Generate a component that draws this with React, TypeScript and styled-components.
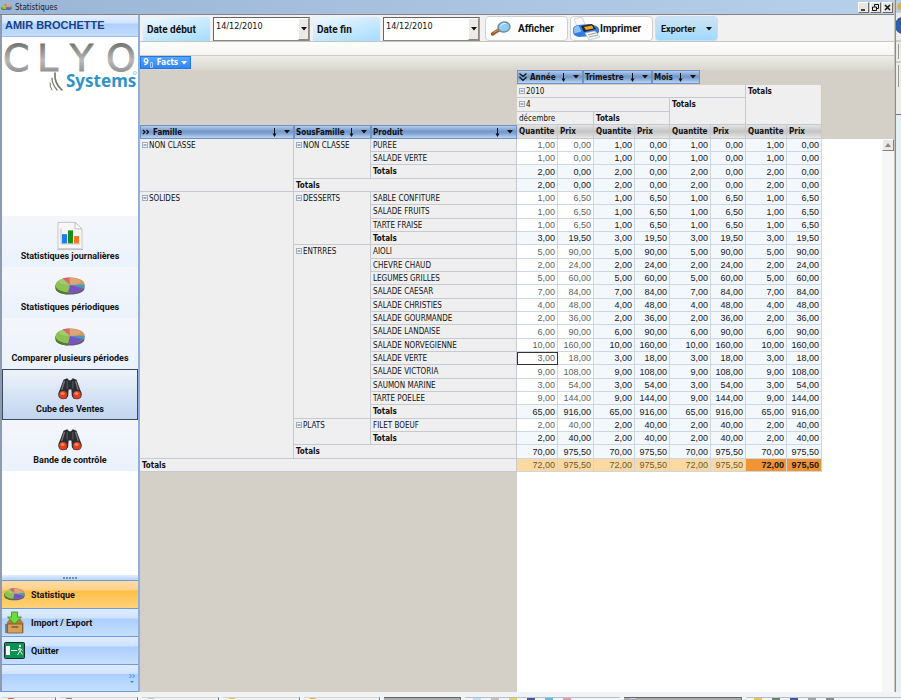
import React from "react";
import styled, { createGlobalStyle, css } from "styled-components";

const ARIAL = '"Liberation Sans", Arial, sans-serif';
const LABEL = 'Roboto, "Liberation Sans", sans-serif';
const TAHOMA = 'Tahoma, "DejaVu Sans Condensed", "DejaVu Sans", sans-serif';

const GlobalStyle = createGlobalStyle`
  * { box-sizing: border-box; }
  body { margin: 0; font-family: ${ARIAL}; font-size: 9px; color: #111; overflow: hidden; }
  button, input { font: inherit; color: inherit; margin: 0; padding: 0; border: 0; border-radius: 0; }
  svg { display: block; flex: none; }
`;

const Screen = styled.div`
  display: flex;
  flex-direction: column;
  height: 100vh;
`;
const Desktop = styled.div`
  flex: 1;
  min-height: 0;
  display: flex;
`;
const Window = styled.div`
  flex: 1;
  min-width: 0;
  display: flex;
  flex-direction: column;
  border-right: 1px solid #c9c5bd;
`;
const TitleBar = styled.header`
  display: flex;
  align-items: center;
  gap: 3px;
  height: 15px;
  flex: none;
  padding: 0 1px 0 1px;
  font-size: 9px;
  color: #222;
  background: linear-gradient(90deg, #9bb5d6, #b7d0eb);
  border-bottom: 1px solid #858585;
`;
const Title = styled.h1`
  margin: 0;
  flex: 1;
  font: 8px ${TAHOMA};
`;
const WindowButtons = styled.div`
  display: flex;
  gap: 1px;
`;
const WindowButton = styled.button`
  width: 11px;
  height: 11px;
  display: grid;
  place-items: center;
  background: #e8e6e1;
  border: 1px solid;
  border-color: #fff #6f6c66 #6f6c66 #fff;
`;
const Columns = styled.div`
  flex: 1;
  min-height: 0;
  display: flex;
`;

const Sidebar = styled.aside`
  width: 140px;
  flex: none;
  display: flex;
  flex-direction: column;
  background: #fff;
  border-left: 2px solid #8d9bb0;
  border-right: 2px solid #8fb0dc;
`;
const UserName = styled.h2`
  margin: 0;
  height: 22px;
  padding: 0 3px;
  font-size: 11px;
  line-height: 21px;
  color: #15428b;
  white-space: nowrap;
  background: linear-gradient(#e3efff 0, #d3e5ff 40%, #aed0ff 41%, #c3dcff 100%);
  border-bottom: 1px solid #9cbfee;
`;
const LogoArea = styled.div`
  flex: 1;
`;
const NavItem = styled.button<{ $active?: boolean }>`
  width: 100%;
  height: 51px;
  display: flex;
  flex-direction: column;
  align-items: center;
  justify-content: flex-end;
  padding-bottom: 5px;
  font-family: ${LABEL};
  font-weight: bold;
  line-height: 12px;
  background: linear-gradient(#f5f6fa, #eaf2fd);
  ${(p) =>
    p.$active &&
    css`
      background: linear-gradient(#eef3fa, #c0d5f0);
      border: 1px solid #3c4a60;
      padding-bottom: 4px;
    `}
`;
const NavIcon = styled.span`
  display: grid;
  place-items: center;
  height: 28px;
  margin-bottom: 1px;
`;
const NavGap = styled.div`
  height: 104px;
`;
const Splitter = styled.div`
  height: 5px;
  display: flex;
  gap: 1px;
  justify-content: center;
  align-items: center;
  background: linear-gradient(#e3efff, #b4d2fb);
`;
const Dot = styled.i`
  width: 2px;
  height: 2px;
  background: #6d8fc0;
`;
const Module = styled.button<{ $active?: boolean }>`
  width: 100%;
  height: 28px;
  display: flex;
  align-items: center;
  gap: 6px;
  padding: 0 2px;
  font-family: ${LABEL};
  font-weight: bold;
  border-top: 1px solid #6f9bdc;
  background: ${(p) =>
    p.$active
      ? "linear-gradient(#ffdca4 0, #ffd08a 34%, #ffbf45 36%, #ffd27a 100%)"
      : "linear-gradient(#e0edff 0, #cfe3ff 34%, #abcfff 36%, #c6dfff 100%)"};
`;
const ModuleOverflow = styled(Module)`
  justify-content: flex-end;
  border-bottom: 1px solid #6f9bdc;
`;

const Main = styled.main`
  flex: 1;
  min-width: 0;
  display: flex;
  flex-direction: column;
  background: #d4d0c8;
`;
const Toolbar = styled.div`
  display: flex;
  align-items: flex-end;
  height: 27px;
  flex: none;
  padding-left: 3px;
  gap: 3px;
  font-family: ${LABEL};
  font-size: 10px;
  font-weight: bold;
  background: #f1f1f1;
  border-bottom: 1px solid #c8c4bc;
`;
const FieldLabel = styled.label`
  width: 67px;
  height: 24px;
  padding-left: 4px;
  line-height: 25px;
  border-radius: 3px 3px 0 0;
  background: linear-gradient(165deg, #e9f5fd 10%, #a3dcff);
`;
const Combo = styled.div`
  width: 97px;
  height: 24px;
  display: flex;
  background: #fff;
  border: 1px solid;
  border-color: #666 #999 #888 #666;
`;
const ComboInput = styled.input`
  flex: 1;
  min-width: 0;
  height: 16px;
  padding-left: 2px;
  font-family: ${TAHOMA};
  font-size: 9px;
  font-weight: normal;
  background: transparent;
`;
const ComboButton = styled.button`
  width: 11px;
  display: grid;
  place-items: center;
  background: #eceae6;
  border: 1px solid;
  border-color: #fff #8b8882 #8b8882 #fff;
`;
const ToolButton = styled.button<{ $width: number; $blue?: boolean }>`
  width: ${(p) => p.$width}px;
  height: 25px;
  display: flex;
  align-items: center;
  gap: 7px;
  padding: 0 5px;
  border-radius: 4px;
  border: 1px solid ${(p) => (p.$blue ? "#c4e2f6" : "#cfcfcf")};
  background: ${(p) => (p.$blue ? "linear-gradient(#cfe3f2, #a0daff)" : "#fdfdfd")};
`;
const ToolGroup = styled.div`
  display: flex;
  gap: 2px;
  margin-left: 2px;
`;
const PrintButton = styled(ToolButton)`
  gap: 0;
  padding: 0 1px;
`;
const ExportButton = styled(ToolButton)`
  justify-content: space-between;
  font-size: 9px;
`;

const FilterBand = styled.div`
  height: 14px;
  flex: none;
  background: linear-gradient(#fdfdfd, #f6f5f3);
  border-bottom: 1px solid #cfcbc3;
`;
const FactsBand = styled.div`
  height: 14px;
  flex: none;
  display: flex;
  background: linear-gradient(#eeede9, #d9d6cf);
`;
const FactsButton = styled.button`
  width: 51px;
  height: 13px;
  display: flex;
  align-items: center;
  gap: 2px;
  padding: 0 3px 0 2px;
  font: bold 8px ${TAHOMA};
  color: #fff;
  background: linear-gradient(#58a6ff, #2e86f6);
  border: 1px solid #1f76e6;
`;
const ColumnFields = styled.div`
  height: 15px;
  flex: none;
  display: flex;
  padding-left: 377px;
`;
const FieldButton = styled.button<{ $width?: number }>`
  display: flex;
  align-items: center;
  gap: 3px;
  width: ${(p) => (p.$width ? p.$width + "px" : "100%")};
  height: 14px;
  padding: 0 3px 0 1px;
  font: bold 8px ${TAHOMA};
  text-align: left;
  white-space: nowrap;
  background: linear-gradient(#b3cbe9 0, #7398ca 45%, #7da1d1 60%, #bdd4ef 100%);
  border: 1px solid #6b93c8;
`;
const FieldName = styled.span`
  flex: 1;
`;
const FieldTools = styled.span`
  display: flex;
  align-items: center;
  gap: 7px;
`;

const Cube = styled.div`
  flex: 1;
  min-height: 0;
  display: flex;
`;
const CubeArea = styled.div`
  flex: 1;
  min-width: 0;
  background:
    linear-gradient(#d4d0c8, #d4d0c8) 0 0 / 100% 54px no-repeat,
    linear-gradient(90deg, #d4d0c8 377px, #fff 377px);
`;
const Table = styled.table`
  table-layout: fixed;
  width: 682px;
  border-collapse: separate;
  border-spacing: 0;
  line-height: 12px;
  tr { height: 13px; }
  tbody tr:nth-child(3n) { height: 14px; }
  thead tr:nth-child(2), thead tr:nth-child(4) { height: 14px; }
`;
const Head = styled.th<{ $bold?: boolean }>`
  padding: 2px 2px 0;
  vertical-align: top;
  text-align: left;
  white-space: nowrap;
  font-family: ${TAHOMA};
  font-size: 8px;
  line-height: 10px;
  background: #efefef;
  border-right: 1px solid #c6cad0;
  border-bottom: 1px solid #c6cad0;
  font-weight: ${(p) => (p.$bold ? "bold" : "normal")};
`;
const FieldHead = styled.th`
  padding: 0;
  vertical-align: top;
`;
const Measure = styled(Head)`
  background: linear-gradient(#e4e4e4, #c4c4c4 50%, #e6e6e6);
`;
const Value = styled.td<{ $tone: "leaf" | "sum" | "total" | "grand"; $focus?: boolean }>`
  padding: 0 2px 0 0;
  text-align: right;
  vertical-align: middle;
  font-size: 9px;
  border-right: 1px solid #ccd6e4;
  border-bottom: 1px solid #ccd6e4;
  color: ${(p) => (p.$tone === "leaf" ? "#5c6460" : p.$tone === "total" ? "#6a5a38" : "#15171c")};
  font-weight: ${(p) => (p.$tone === "grand" ? "bold" : "normal")};
  background: ${(p) =>
    ({ leaf: "#fff", sum: "#f3f8fc", total: "#fbd9a0", grand: "#f39433" })[p.$tone]};
  ${(p) => p.$focus && css`outline: 1px solid #333; outline-offset: -1px;`}
`;
const ToggleButton = styled.button`
  display: inline-block;
  vertical-align: 0;
  background: transparent;
  margin-right: 1px;
`;
const Scrollbar = styled.div`
  width: 12px;
  flex: none;
  margin-top: 54px;
  background: #f6f6f6;
`;
const ScrollButton = styled.button`
  width: 12px;
  height: 12px;
  display: grid;
  place-items: center;
  background: #ebe9e5;
  border: 1px solid;
  border-color: #fff #85827c #85827c #fff;
`;

const Backdrop = styled.div`
  width: 6px;
  flex: none;
  display: flex;
  flex-direction: column;
  background: #e4f0f3;
  border-left: 1px solid #8c8c8c;
`;
const BackdropTop = styled.div`
  height: 115px;
  background: #eeece8;
  border-bottom: 1px solid #777;
`;
const Taskbar = styled.footer`
  height: 8px;
  flex: none;
  display: flex;
  align-items: flex-end;
  gap: 4px;
  padding-left: 2px;
  background: #f1f4f7;
`;
const Task = styled.div<{ $width: number; $dark?: boolean; $accent?: string }>`
  width: ${(p) => p.$width}px;
  height: 3px;
  padding-left: 6px;
  border-top: 1px solid ${(p) => (p.$dark ? "#666" : "#d2d2d2")};
  border-right: 1px solid #777;
  background: ${(p) => (p.$dark ? "#aaa" : "#f2f2f2")};
  &::before {
    content: "";
    display: block;
    width: 6px;
    height: 1px;
    background: ${(p) => p.$accent || "transparent"};
  }
`;
const Tray = styled.div`
  flex: 1;
  height: 3px;
  display: flex;
  gap: 10px;
  padding-left: 8px;
  border-top: 1px solid #b8c0cc;
`;
const TrayMark = styled.i<{ $color: string }>`
  width: 8px;
  height: 2px;
  background: ${(p) => p.$color};
`;

const Caret = ({ color = "#111" }: { color?: string }) => (
  <svg width="6" height="4" viewBox="0 0 6 4"><path d="M0 0h6L3 3.5z" fill={color} /></svg>
);
const SortArrow = () => (
  <svg width="5" height="9" viewBox="0 0 5 9">
    <path d="M2.5 0v8" stroke="#111" />
    <path d="M.5 5.5h4L2.5 9z" fill="#111" />
  </svg>
);
const Chevrons = ({ down }: { down?: boolean }) => (
  <svg width="8" height="8" viewBox="0 0 8 8" fill="none" stroke="#111" strokeWidth="1.2">
    {down ? <path d="M.5.5 4 3.5 7.5.5M.5 4 4 7.5 7.5 4" /> : <path d="M1 2l2 2-2 2M4.500 2l2 2-2 2" />}
  </svg>
);
const Toggle = ({ label }: { label: string }) => (
  <ToggleButton aria-label={`Réduire ${label}`}>
    <svg width="6" height="6" viewBox="0 0 6 6">
      <rect x=".5" y=".5" width="5" height="5" fill="#f4f7fb" stroke="#9fadc2" />
      <path d="M1.500 3h3" stroke="#4b6386" />
    </svg>
  </ToggleButton>
);
const Logo = () => (
  <svg width="136" height="58" viewBox="0 0 136 58" overflow="visible" role="img" aria-label="CLYO Systems">
    <defs>
      <linearGradient id="steel" x1="0" y1="0" x2="0" y2="1">
        <stop offset="0" stopColor="#555" />
        <stop offset=".55" stopColor="#b9b9b9" />
        <stop offset="1" stopColor="#777" />
      </linearGradient>
    </defs>
    <text x="1 35 68 104" y="34" fontFamily="DejaVu Sans" fontSize="38" fill="url(#steel)" stroke="url(#steel)" strokeWidth=".8">CLYO</text>
    <g fill="none" stroke="#777265" strokeLinecap="round">
      <path d="M53 36q-1 10 7 17" strokeWidth="1.600" />
      <path d="M50 41q0 6 5 12" strokeWidth="1.200" />
      <path d="M48 46q0 4 2 7" />
    </g>
    <text x="64" y="50" fontFamily="Noto Sans, Open Sans" fontWeight="700" fontSize="17" fill="#2f93c5">Systems</text>
    <circle cx="133" cy="36" r="1.500" fill="none" stroke="#6bb6d6" strokeWidth=".6" />
  </svg>
);
const PieIcon = ({ width = 30 }: { width?: number }) => (
  <svg width={width} height={(width * 18) / 30} viewBox="0 0 30 18">
    <path d="M.5 8v3c0 4 6 6.500 14.500 6.500S29.500 15 29.500 11V8z" fill="#625c78" />
    <path d="M.5 8v3c0 3.500 5 6 12 6.500V12z" fill="#4f7a2d" />
    <ellipse cx="15" cy="8" rx="14.500" ry="7.500" fill="#8fc152" />
    <path d="M15 8 14.500.5C23 .3 29.500 3.500 29.500 7.500z" fill="#d99460" />
    <path d="M15 8 7.500 1.600Q10.500.6 14.500.5z" fill="#cf4d5b" />
    <path d="M15 8l14.500-.5q0 2-1.500 3.400z" fill="#3b9cc8" />
    <path d="M15 8l13 2.900C25.500 14 20 15.700 13 15.450z" fill="#7850c8" />
    <ellipse cx="15" cy="4.500" rx="11" ry="3.500" fill="#fff" opacity=".16" />
  </svg>
);
const ReportIcon = () => (
  <svg width="26" height="30" viewBox="0 0 26 32" preserveAspectRatio="none">
    <path d="M1 1.500h17l7 7v21H1z" fill="#f7f7f7" stroke="#c5c5c5" />
    <path d="M18 1.500v7h7z" fill="#fff" stroke="#bdbdbd" />
    <path d="M0 30h26v1H0z" fill="#bbb" />
    <path d="M5 14h5v10H5z" fill="#1d7df2" />
    <path d="M11 10h5v14h-5z" fill="#189018" />
    <path d="M17 16h5v8h-5z" fill="#ff7420" />
    <path d="M4 8v16.500h19" fill="none" stroke="#aaa" strokeWidth=".7" />
  </svg>
);
const Binoculars = () => (
  <svg width="26" height="23" viewBox="0 0 28 24">
    <path d="M7 2.500 11 1l2 2h2l2-2 4 1.500L26 16l-1 6-7 1-2-3-.5-7h-3L12 20l-2 3-7-1-1-6z" fill="#2c2d30" />
    <path d="M8 4 5 14M20 4l3 10" stroke="#777" strokeWidth="1.500" />
    <path d="M11 4v8M17 4v8" stroke="#55585c" strokeWidth="1.200" />
    <circle cx="6.500" cy="18.500" r="5.200" fill="#303135" />
    <circle cx="21.500" cy="18.500" r="5.200" fill="#303135" />
    <circle cx="6.500" cy="18.800" r="4.200" fill="#e0401f" />
    <circle cx="21.500" cy="18.800" r="4.200" fill="#e0401f" />
    <ellipse cx="6" cy="17.500" rx="2.200" ry="1.500" fill="#ff8862" />
    <ellipse cx="21" cy="17.500" rx="2.200" ry="1.500" fill="#ff8862" />
  </svg>
);
const ImportIcon = () => (
  <svg width="21" height="23" viewBox="0 0 20 23">
    <path d="M2 12 5 8h11l3 4v10H3z" fill="#b07b3e" />
    <path d="M3 13h15v9H3z" fill="#d3a05e" stroke="#80552a" strokeWidth=".8" />
    <path d="M1.500 13v9" stroke="#3d2b16" />
    <path d="M7 15h7v2H7z" fill="#9c6b34" />
    <path d="M7 1h6v5h4l-7 7-7-7h4z" fill="#6fdb3c" stroke="#2f8f1a" strokeWidth=".8" />
  </svg>
);
const ExitIcon = () => (
  <svg width="21" height="17" viewBox="0 0 21 17">
    <rect x=".5" y=".5" width="20" height="16" rx="1" fill="#079452" stroke="#1c2c28" />
    <path d="M2 4h4v9H2z" fill="#fff" />
    <path d="M7 8.500h6" stroke="#fff" />
    <circle cx="16" cy="4" r="1.200" fill="#fff" />
    <path d="M15.500 6 14 8.500M15.500 6l1 3.500 2 3M16 9l-2.500 4M16 6.500l2.500 2" stroke="#fff" fill="none" />
  </svg>
);
const SearchIcon = () => (
  <svg width="20" height="15" viewBox="0 0 20 15">
    <path d="M8.500 8.500 1.500 13" stroke="#a85d24" strokeWidth="3.400" strokeLinecap="round" />
    <path d="M8 8.300 3 11.500" stroke="#e49a54" strokeLinecap="round" />
    <ellipse cx="13" cy="6" rx="6" ry="5" fill="#8fcdef" stroke="#6d8ba5" strokeWidth="1.400" transform="rotate(-12 13 6)" />
    <path d="M9.500 5q2-3 5-2.500" stroke="#fff" fill="none" />
  </svg>
);
const PrinterIcon = () => (
  <svg width="28" height="24" viewBox="0 0 28 24">
    <path d="M2 2l8-2 4 10-8 2z" fill="#fafafa" stroke="#c4c4c4" strokeWidth=".7" />
    <path d="M1 12q0-3 5-4l11-1q9 1 10 5v3q-2 4-8 4L7 20q-6-1-6-5z" fill="#347be0" />
    <path d="M1.500 12q1-3 5-3.500l3 6-7 2z" fill="#8dc1f8" />
    <path d="M9 9l11-2 4 5-12 3z" fill="#27272b" />
    <path d="M12 10l8-1.500 1.500 3L14 13z" fill="#ffa51d" />
    <path d="M13 16l10-2 5 6-11 3z" fill="#f5fbf7" stroke="#a9b8c4" strokeWidth=".6" />
    <path d="M16 18l8-2" stroke="#d778b2" /><path d="M17 20l9-2" stroke="#6fcb84" />
  </svg>
);

const FieldControl = ({ name, width, lead }: { name: string; width?: number; lead?: React.ReactNode }) => (
  <FieldButton $width={width}>
    {lead}
    <FieldName>{name}</FieldName>
    <FieldTools><SortArrow /><Caret /></FieldTools>
  </FieldButton>
);

type Row = {
  family?: [string, number];
  sub?: [string, number];
  label: string;
  level?: 1 | 2 | 3;
  qty: string;
  price: string;
  focus?: boolean;
};
const item = (label: string, qty: string, price: string, extra: Partial<Row> = {}): Row => ({ label, qty, price, ...extra });
const total = (level: 1 | 2 | 3, qty: string, price: string): Row => ({ label: "Totals", level, qty, price });

const rows: Row[] = [
  item("PUREE", "1,00", "0,00", { family: ["NON CLASSE", 4], sub: ["NON CLASSE", 3] }),
  item("SALADE VERTE", "1,00", "0,00"),
  total(1, "2,00", "0,00"),
  total(2, "2,00", "0,00"),
  item("SABLE CONFITURE", "1,00", "6,50", { family: ["SOLIDES", 20], sub: ["DESSERTS", 4] }),
  item("SALADE FRUITS", "1,00", "6,50"),
  item("TARTE FRAISE", "1,00", "6,50"),
  total(1, "3,00", "19,50"),
  item("AIOLI", "5,00", "90,00", { sub: ["ENTRRES", 13] }),
  item("CHEVRE CHAUD", "2,00", "24,00"),
  item("LEGUMES GRILLES", "5,00", "60,00"),
  item("SALADE CAESAR", "7,00", "84,00"),
  item("SALADE CHRISTIES", "4,00", "48,00"),
  item("SALADE GOURMANDE", "2,00", "36,00"),
  item("SALADE LANDAISE", "6,00", "90,00"),
  item("SALADE NORVEGIENNE", "10,00", "160,00"),
  item("SALADE VERTE", "3,00", "18,00", { focus: true }),
  item("SALADE VICTORIA", "9,00", "108,00"),
  item("SAUMON MARINE", "3,00", "54,00"),
  item("TARTE POELEE", "9,00", "144,00"),
  total(1, "65,00", "916,00"),
  item("FILET BOEUF", "2,00", "40,00", { sub: ["PLATS", 2] }),
  total(1, "2,00", "40,00"),
  total(2, "70,00", "975,50"),
  total(3, "72,00", "975,50"),
];
const groups = [0, 1, 2, 3];

const CubeRow = ({ row }: { row: Row }) => (
  <tr>
    {row.family && <Head scope="rowgroup" rowSpan={row.family[1]}><Toggle label={row.family[0]} />{row.family[0]}</Head>}
    {row.sub && <Head scope="rowgroup" rowSpan={row.sub[1]}><Toggle label={row.sub[0]} />{row.sub[0]}</Head>}
    <Head scope="row" colSpan={row.level || 1} $bold={!!row.level}>{row.label}</Head>
    {groups.map((g) => {
      const tone = row.level === 3 ? (g === 3 ? "grand" : "total") : row.level || g > 0 ? "sum" : "leaf";
      return (
        <React.Fragment key={g}>
          <Value $tone={tone} $focus={row.focus && g === 0}>{row.qty}</Value>
          <Value $tone={tone}>{row.price}</Value>
        </React.Fragment>
      );
    })}
  </tr>
);

const nav = [
  { label: "Statistiques journalières", icon: <ReportIcon /> },
  { label: "Statistiques périodiques", icon: <PieIcon /> },
  { label: "Comparer plusieurs périodes", icon: <PieIcon /> },
  { label: "Cube des Ventes", icon: <Binoculars />, active: true },
  { label: "Bande de contrôle", icon: <Binoculars /> },
];

const DateField = ({ id, label }: { id: string; label: string }) => (
  <>
    <FieldLabel htmlFor={id}>{label}</FieldLabel>
    <Combo>
      <ComboInput id={id} defaultValue="14/12/2010" />
      <ComboButton aria-label={`Choisir ${label}`}><Caret /></ComboButton>
    </Combo>
  </>
);

export default function App() {
  return (
    <Screen>
      <GlobalStyle />
      <Desktop>
        <Window>
          <TitleBar>
            <PieIcon width={11} />
            <Title>Statistiques</Title>
            <WindowButtons>
              <WindowButton aria-label="Réduire"><svg width="7" height="7"><path d="M1 6h4" stroke="#111" strokeWidth="1.500" /></svg></WindowButton>
              <WindowButton aria-label="Restaurer"><svg width="7" height="7" fill="none" stroke="#111"><path d="M2.500 2.500v-2h4v4h-2M.5 3h4v3.500h-4z" /></svg></WindowButton>
              <WindowButton aria-label="Fermer"><svg width="7" height="7"><path d="M1 1l5 5M6 1 1 6" stroke="#111" strokeWidth="1.500" /></svg></WindowButton>
            </WindowButtons>
          </TitleBar>
          <Columns>
            <Sidebar>
              <UserName>AMIR BROCHETTE</UserName>
              <LogoArea><Logo /></LogoArea>
              <nav>
                {nav.map((n) => (
                  <NavItem key={n.label} $active={n.active}>
                    <NavIcon>{n.icon}</NavIcon>
                    {n.label}
                  </NavItem>
                ))}
              </nav>
              <NavGap />
              <Splitter>{[0, 1, 2, 3, 4].map((d) => <Dot key={d} />)}</Splitter>
              <Module $active><PieIcon width={21} />Statistique</Module>
              <Module><ImportIcon />Import / Export</Module>
              <Module><ExitIcon />Quitter</Module>
              <ModuleOverflow aria-label="Plus de modules">
                <svg width="8" height="11" viewBox="0 0 8 11" fill="none" stroke="#2f8cf0">
                  <path d="M1.500 1l2 2-2 2M4.500 1l2 2-2 2" />
                  <path d="M2 8h4L4 10z" fill="#2f8cf0" stroke="none" />
                </svg>
              </ModuleOverflow>
            </Sidebar>
            <Main>
              <Toolbar>
                <DateField id="start" label="Date début" />
                <DateField id="end" label="Date fin" />
                <ToolGroup>
                  <ToolButton $width={83}><SearchIcon />Afficher</ToolButton>
                  <PrintButton $width={83}><PrinterIcon />Imprimer</PrintButton>
                  <ExportButton $width={63} $blue>Exporter<Caret /></ExportButton>
                </ToolGroup>
              </Toolbar>
              <FilterBand />
              <FactsBand>
                <FactsButton>
                  <svg width="11" height="10" viewBox="0 0 11 10" fill="none" stroke="#fff">
                    <circle cx="3" cy="2.500" r="1.800" strokeWidth="1.300" />
                    <path d="M4.800 2.500q0 4-3.500 4" strokeWidth="1.300" />
                    <path d="M7.500 9.500v-5h2v5z" stroke="#a9cdf7" />
                  </svg>
                  <FieldName>Facts</FieldName>
                  <Caret color="#fff" />
                </FactsButton>
              </FactsBand>
              <ColumnFields>
                <FieldControl name="Année" width={66} lead={<Chevrons down />} />
                <FieldControl name="Trimestre" width={69} />
                <FieldControl name="Mois" width={48} />
              </ColumnFields>
              <Cube>
                <CubeArea>
                  <Table>
                    <colgroup>
                      {[154, 77, 146, 41, 36, 41, 35, 41, 35, 41, 35].map((w, i) => <col key={i} width={w} />)}
                    </colgroup>
                    <thead>
                      <tr>
                        <td colSpan={3} rowSpan={3} />
                        <Head colSpan={6}><Toggle label="2010" />2010</Head>
                        <Head colSpan={2} rowSpan={3} $bold>Totals</Head>
                      </tr>
                      <tr>
                        <Head colSpan={4}><Toggle label="4" />4</Head>
                        <Head colSpan={2} rowSpan={2} $bold>Totals</Head>
                      </tr>
                      <tr>
                        <Head colSpan={2}>décembre</Head>
                        <Head colSpan={2} $bold>Totals</Head>
                      </tr>
                      <tr>
                        <FieldHead><FieldControl name="Famille" lead={<Chevrons />} /></FieldHead>
                        <FieldHead><FieldControl name="SousFamille" /></FieldHead>
                        <FieldHead><FieldControl name="Produit" /></FieldHead>
                        {groups.map((g) => (
                          <React.Fragment key={g}>
                            <Measure $bold>Quantite</Measure>
                            <Measure $bold>Prix</Measure>
                          </React.Fragment>
                        ))}
                      </tr>
                    </thead>
                    <tbody>{rows.map((r, i) => <CubeRow key={i} row={r} />)}</tbody>
                  </Table>
                </CubeArea>
                <Scrollbar>
                  <ScrollButton aria-label="Défiler vers le haut">
                    <svg width="6" height="4"><path d="M0 4h6L3 0z" fill="#8a8a8a" /></svg>
                  </ScrollButton>
                </Scrollbar>
              </Cube>
            </Main>
          </Columns>
        </Window>
        <Backdrop>
          <BackdropTop>
            <svg width="5" height="115" viewBox="0 0 5 115">
              <path d="M0 0h5v13H0z" fill="#b7d0eb" />
              <path d="M5 2Q1 4 1 9l4 1z" fill="#e6ae2e" />
              <path d="M5 17a9 9 0 0 0 0 17z" fill="#2c5da8" />
              <path d="M0 41h5M0 62h5" stroke="#aaa" />
              <path d="M2.500 44v15M2.500 65v22" stroke="#999" />
            </svg>
          </BackdropTop>
        </Backdrop>
      </Desktop>
      <Taskbar>
        <Task $width={54} $accent="#d86a5c" />
        <Task $width={78} $accent="#888" />
        <Task $width={77} $accent="#c0c8cc" />
        <Task $width={77} $accent="#f1c24c" />
        <Task $width={76} $accent="#edb04a" />
        <Task $width={77} $dark />
        <Tray>
          {["#c7def0", "#d0c0c0", "#ead06a", "#46599a", "#62b4e4", "#e8a0a8"].map((c) => <TrayMark key={c} $color={c} />)}
        </Tray>
        <Task $width={118} $dark $accent="#c9ccf5" />
        <Tray>
          {["#edc255", "#68845c", "#4258a4", "#a5a5a5", "#8e8e8e"].map((c) => <TrayMark key={c} $color={c} />)}
        </Tray>
      </Taskbar>
    </Screen>
  );
}
